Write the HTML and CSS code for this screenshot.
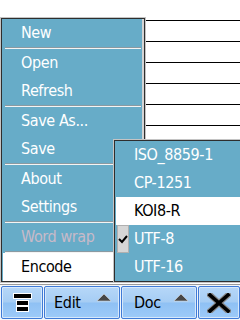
FILE: index.html
```html
<!DOCTYPE html>
<html lang="en">
<head>
    <meta charset="UTF-8">
    <title>Editor menu</title>
    <link rel="stylesheet" href="styles.css">
</head>
<body>
<div class="screen">
    <div class="doc">
        <div class="rule"></div>
        <div class="rule"></div>
        <div class="rule"></div>
        <div class="rule"></div>
        <div class="rule"></div>
        <div class="rule"></div>
        <div class="rule"></div>
        <div class="rule"></div>
        <div class="rule"></div>
        <div class="rule"></div>
        <div class="rule"></div>
        <div class="rule"></div>
        <div class="rule"></div>
    </div>

    <div class="menu main-menu">
        <div class="item">New</div>
        <div class="sep"></div>
        <div class="item">Open</div>
        <div class="item">Refresh</div>
        <div class="sep"></div>
        <div class="item">Save As...</div>
        <div class="item">Save</div>
        <div class="sep"></div>
        <div class="item">About</div>
        <div class="item">Settings</div>
        <div class="sep"></div>
        <div class="item dimmed">Word wrap</div>
        <div class="sep"></div>
        <div class="item active">Encode</div>
    </div>

    <div class="menu sub-menu">
        <div class="item">ISO_8859-1</div>
        <div class="item">CP-1251</div>
        <div class="item active">KOI8-R</div>
        <div class="item">
            <span class="check">
                <svg width="10" height="10" viewBox="0 0 10 10"><path d="M1 5 L4 8 L9 2" fill="none" stroke="#000" stroke-width="2"/></svg>
            </span>
            UTF-8
        </div>
        <div class="item">UTF-16</div>
    </div>

    <div class="softkeys">
        <div class="key key-small">
            <svg width="22" height="21" viewBox="0 0 22 21">
                <rect x="2.5" y="1.5" width="18" height="5" fill="#000" stroke="#fff"/>
                <rect x="5.5" y="8.5" width="12" height="5" fill="#000" stroke="#fff"/>
                <rect x="5.5" y="14.5" width="12" height="5" fill="#000" stroke="#fff"/>
            </svg>
        </div>
        <div class="key key-wide key-edit">
            <span class="label">Edit</span>
            <svg class="arrow" width="16" height="9" viewBox="0 0 16 9"><polygon points="1,8 8,1 15,8" fill="#474747" stroke="#d8d8d8" stroke-width="0.6"/></svg>
        </div>
        <div class="key key-wide key-doc">
            <span class="label">Doc</span>
            <svg class="arrow" width="16" height="9" viewBox="0 0 16 9"><polygon points="1,8 8,1 15,8" fill="#474747" stroke="#d8d8d8" stroke-width="0.6"/></svg>
        </div>
        <div class="key key-small">
            <svg width="24" height="20" viewBox="0 0 24 20">
                <path d="M3 2 L21 18 M21 2 L3 18" stroke="#8a8a8a" stroke-width="6" stroke-linecap="square"/>
                <path d="M3 2 L21 18 M21 2 L3 18" stroke="#000" stroke-width="3.6" stroke-linecap="square"/>
            </svg>
        </div>
    </div>
</div>
</body>
</html>
```

FILE: styles.css
```css
body {
  margin: 0;
  background: #fff;
  font-family: "DejaVu Sans Condensed", "DejaVu Sans", sans-serif;
}
.screen {
  position: relative;
  width: 240px;
  height: 320px;
  overflow: hidden;
  display: flex;
  flex-direction: column;
}
.doc {
  flex: 1;
  overflow: hidden;
}
.rule {
  height: 20px;
  border-bottom: 1px solid #000;
}

/* popup menus */
.menu {
  position: absolute;
  box-sizing: border-box;
  background: #67acc8;
  border: 1px solid #2e2e2e;
  box-shadow: 0 0 0 1px #c4c4c4;
  padding: 0 1px;
}
.main-menu {
  left: 1px;
  top: 18px;
  width: 144px;
  box-shadow: 0 0 0 1px #c4c4c4, inset -2px 0 0 #d4d4d4;
}
.sub-menu {
  left: 114px;
  top: 140px;
  width: 140px;
}
.item {
  position: relative;
  height: 28px;
  line-height: 28px;
  padding-left: 18px;
  color: #fff;
  font-size: 16px;
  letter-spacing: -0.4px;
  white-space: nowrap;
}
.item.dimmed {
  color: #c8bac8;
}
.item.active {
  background: #fff;
  color: #000;
}
.sep {
  height: 1px;
  margin: 0 2px;
  border-top: 1px solid #8a9aa2;
  background: #f4f4f4;
}
.check {
  position: absolute;
  left: 1px;
  top: 0;
  bottom: 0;
  width: 12px;
  background: #d6d6d6;
  box-shadow: inset 0 0 0 1px #b0b0b0;
  display: flex;
  align-items: center;
  justify-content: center;
}

/* softkey bar */
.softkeys {
  height: 36px;
  box-sizing: border-box;
  border-top: 1px solid #9a9a9a;
  padding: 1px 0 1px 1px;
  display: flex;
  gap: 1px;
  background: #f2f7fc;
}
.key {
  box-sizing: border-box;
  height: 33px;
  border: 1px solid #3f7ad6;
  border-radius: 2px;
  background: linear-gradient(#b6d7f8 0%, #a6cdf4 48%, #8fc1f4 52%, #9dcaf8 100%);
  box-shadow: inset 0 0 0 1px #d6e8fb;
  display: flex;
  align-items: center;
}
.key-small {
  width: 42px;
  justify-content: center;
}
.key-wide {
  width: 76px;
  justify-content: space-between;
  padding-right: 7px;
}
.key-edit {
  padding-left: 9px;
}
.key-doc {
  padding-left: 12px;
}
.label {
  font-size: 16px;
  letter-spacing: -0.3px;
  color: #000;
}
.arrow {
  align-self: flex-start;
  margin-top: 6px;
}
```
